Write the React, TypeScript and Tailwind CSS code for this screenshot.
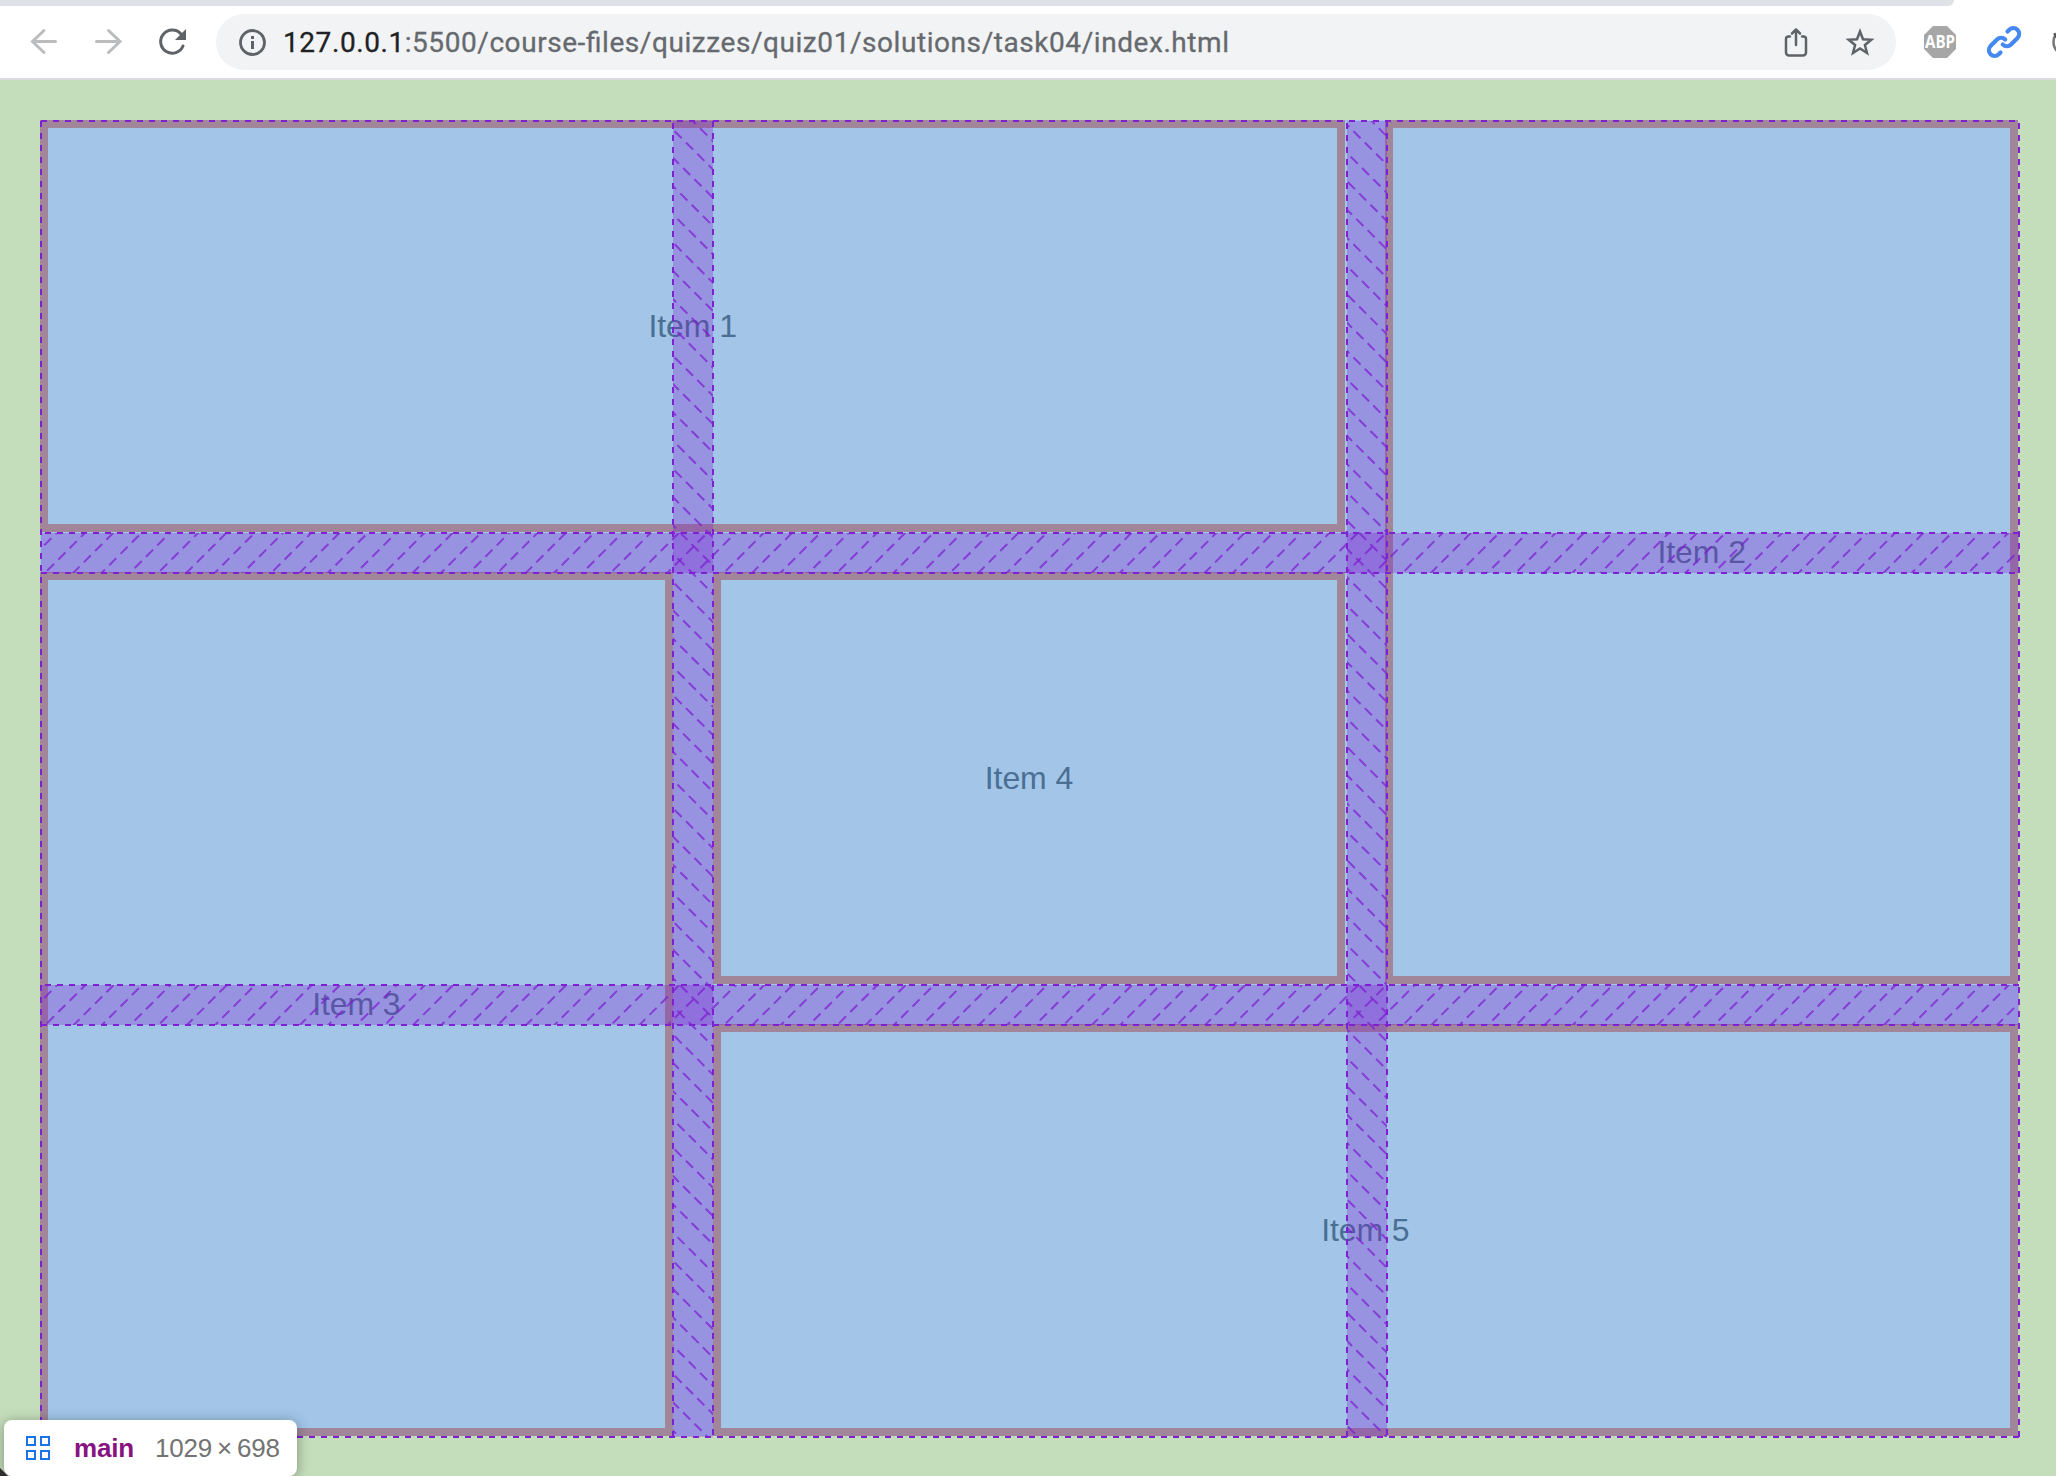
function Box({ cls, label }: { cls: string; label: string }) {
  return (
    <div className={"flex items-center justify-center border-8 border-[#a08698] bg-[#a2c5e8] text-[32px] text-[#4a6f93] " + cls}>
      <span className="tracking-[-0.1px]">{label}</span>
    </div>
  );
}

const INK = "#7f20d2";

/* Grid inspector overlay: gap hatching and dashed outlines. */
function Overlay() {
  return (
    <svg className="pointer-events-none absolute left-0 top-0" width="2056" height="1396" viewBox="0 80 2056 1396" fill="none">
      <defs>
        <clipPath id="columns"><path d="M673 121h40v1316h-40zM1347 121h40v1316h-40z" /></clipPath>
        <clipPath id="rows"><path d="M41 533h1978v40H41zM41 985h1978v40H41z" /></clipPath>
      </defs>
      <g fill={INK} fillOpacity="0.3">
        <path d="M673 121h40v1316h-40z" />
        <path d="M1347 121h40v1316h-40z" />
        <path d="M41 533h1978v40H41z" />
        <path d="M41 985h1978v40H41z" />
      </g>
      <g stroke={INK} strokeOpacity="0.75" strokeWidth="2" strokeDasharray="10 6">
        <g clipPath="url(#columns)">
          <g transform="rotate(45)">
            {Array.from({ length: 110 }, (_, i) => (
              <path key={i} d={`M9.800 ${-984.3 + i * 20}H2500`} />
            ))}
          </g>
        </g>
        <g clipPath="url(#rows)">
          <g transform="rotate(-45)">
            {Array.from({ length: 115 }, (_, i) => (
              <path key={i} d={`M-1010.400 ${16.9 + i * 20}H1500`} />
            ))}
          </g>
        </g>
      </g>
      <g stroke={INK} strokeWidth="2" strokeDasharray="6 6">
        <path d="M41 121H2019" />
        <path d="M41 121V1437" />
        <path d="M2019 123V1437" />
        <path d="M45 1437H2019" />
        <path d="M673 123V1437M713 121V1437M1347 123V1437M1387 121V1437" />
        <path d="M45 533H2019M41 573H2019M45 985H2019M41 1025H2019" />
      </g>
    </svg>
  );
}

export default function App() {
  return (
    <div className="relative flex h-[1476px] w-[2056px] flex-col overflow-hidden bg-[#c4debb] font-['Liberation_Sans',Arial,sans-serif]">
      <header className="h-20 shrink-0 border-b-2 border-[#dadce0] bg-white">
        <div className="h-1.5 w-[1954px] rounded-br-[14px] bg-[#dee1e6]" />
        <div className="flex h-18 items-center">
          <svg className="h-18 w-[216px] shrink-0" viewBox="0 6 216 72" fill="none" strokeWidth="3" strokeLinecap="round">
            <path d="M55.500 41.500H32.500M44 30.500l-11.500 11 11.500 11" stroke="#babcbe" />
            <path d="M96.500 41.500h23M108.500 30.500l11.500 11-11.500 11" stroke="#babcbe" />
            <path d="M181 34A11.600 11.600 0 1 0 183 46" stroke="#5f6368" />
            <path d="M186 29v11h-11z" fill="#5f6368" />
          </svg>
          <div className="flex h-14 w-[1680px] items-center rounded-full bg-[#f1f3f4]">
            <svg className="ml-[22px] h-7 w-7 shrink-0" viewBox="0 0 28 28" fill="none">
              <circle cx="14.500" cy="14.500" r="12" stroke="#5f6368" strokeWidth="2.800" />
              <path d="M13 8h3v3h-3zM13 13h3v8h-3z" fill="#5f6368" />
            </svg>
            <svg className="h-14 w-[957px] shrink-0 overflow-visible" viewBox="0 0 957 56">
              <text x="17" y="38" fontFamily="Roboto, sans-serif" fontSize="28" textLength="946" fill="#66696d" stroke="#66696d" strokeWidth="0.300"><tspan fill="#202124" stroke="#202124">127.0.0.1</tspan>:5500/course-files/quizzes/quiz01/solutions/task04/index.html</text>
            </svg>
          </div>
        </div>
      </header>
      <svg className="absolute left-[1770px] top-2.5" width="286" height="64" viewBox="1770 10 286 64" fill="none" strokeLinecap="round" strokeLinejoin="round">
        <path d="M1790 36.500h-1.500a2.500 2.500 0 0 0-2.500 2.500v13.500a3 3 0 0 0 3 3h14a3 3 0 0 0 3-3V39a2.500 2.500 0 0 0-2.500-2.500H1802M1796 45V30M1792 33.500l4-4 4 4" stroke="#5f6368" strokeWidth="2.500" />
        <path d="M1860 31.500l3 7.700 8.300.5-6.400 5.300 2.100 8-7-4.500-7 4.500 2.100-8-6.400-5.300 8.300-.5z" stroke="#5f6368" strokeWidth="2.500" strokeLinejoin="miter" />
        <path d="M1933 26h14l9 9v14l-9 9h-14l-9-9V35z" fill="#a6a6a6" />
        <text x="1940" y="48" textAnchor="middle" fontFamily="Open Sans, sans-serif" fontWeight="700" fontSize="17" textLength="30" lengthAdjust="spacingAndGlyphs" fill="white">ABP</text>
        <g stroke="#4688f1" strokeWidth="4.200">
          <path d="M2007.500 31.500l1.800-1.800a5.800 5.800 0 0 1 8.200 8.200l-6.500 6.500a5.800 5.800 0 0 1-8.200 0" />
          <path d="M2000.500 52.500l-1.800 1.800a5.800 5.800 0 0 1-8.200-8.200l6.500-6.500a5.800 5.800 0 0 1 8.200 0" />
        </g>
        <circle cx="2067" cy="42" r="13.500" fill="white" stroke="#777" strokeWidth="2.500" />
        <path d="M2054.500 34l1.500 3" stroke="#555" strokeWidth="2" />
      </svg>
      <main className="relative flex-1">
        <div className="ml-10 mt-10 grid h-[1316px] w-[1978px] grid-cols-3 grid-rows-3 gap-10 bg-[#a2c5e8]">
          <Box cls="col-span-2" label="Item 1" />
          <Box cls="row-span-2" label="Item 2" />
          <Box cls="row-span-2" label="Item 3" />
          <Box cls="" label="Item 4" />
          <Box cls="col-span-2" label="Item 5" />
        </div>
        <Overlay />
      </main>
      <div className="absolute bottom-0 left-0 h-2 w-2 bg-[#333] [clip-path:polygon(0_0,100%_100%,0_100%)]" />
      <div className="absolute left-1 top-[1420px] flex h-14 w-[293px] items-center rounded-lg bg-white shadow-[0_2px_14px_rgba(0,0,0,0.35)]">
        <svg className="ml-[22px] shrink-0" width="24" height="24" viewBox="0 0 24 24" fill="none" stroke="#1a73e8" strokeWidth="2">
          <path d="M1 1h8v8H1zM15 1h8v8h-8zM1 15h8v8H1zM15 15h8v8h-8z" />
        </svg>
        <span className="ml-6 text-[26px] font-bold tracking-[-0.2px] text-[#881280]">main</span>
        <span className="ml-[21px] whitespace-nowrap text-[26px] tracking-[-0.2px] text-[#737373]">1029<span className="mx-[5px]">×</span>698</span>
      </div>
    </div>
  );
}
